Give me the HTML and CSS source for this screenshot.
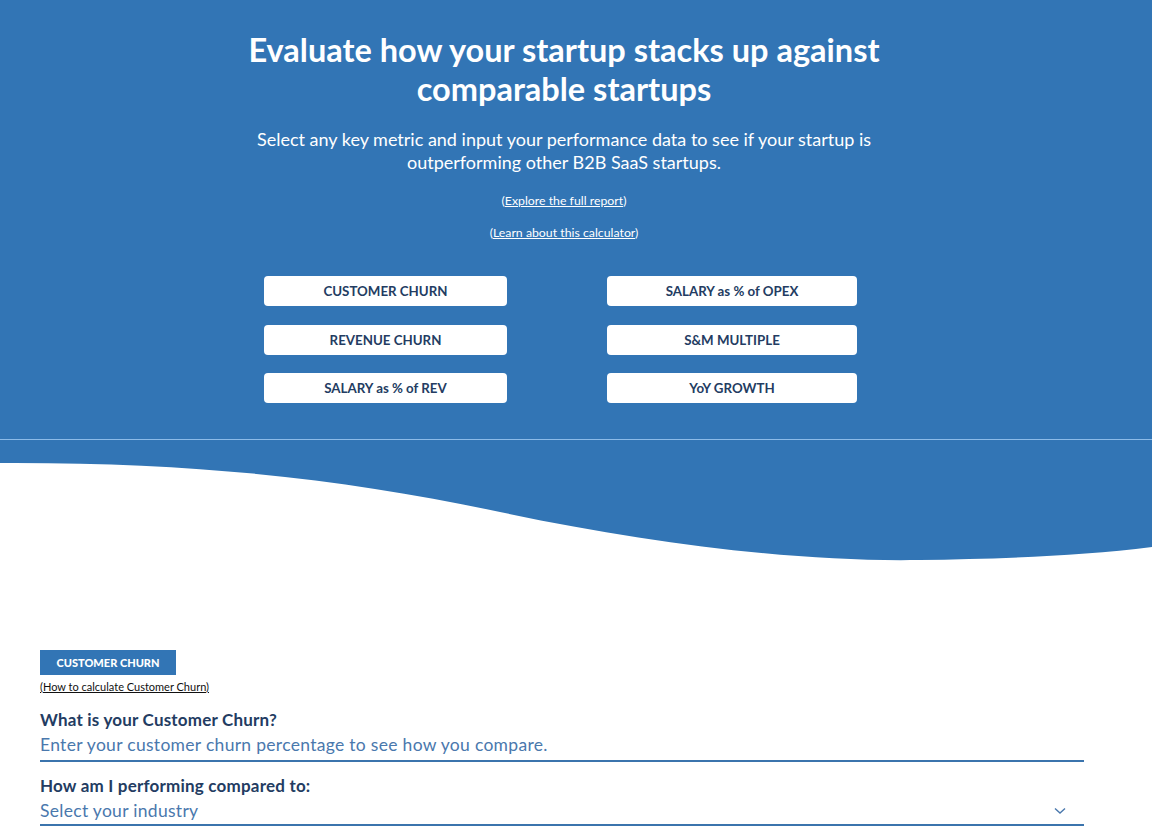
FILE: index.html
```html
<!DOCTYPE html>
<html lang="en">
<head>
    <meta charset="UTF-8">
    <meta name="viewport" content="width=device-width, initial-scale=1.0">
    <title>Startup Benchmark Calculator</title>
    <link rel="stylesheet" href="styles.css">
</head>
<body>
    <header class="hero">
        <div class="hero-inner">
            <h1>Evaluate how your startup stacks up against comparable startups</h1>
            <p class="lead">Select any key metric and input your performance data to see if your startup is outperforming other B2B SaaS startups.</p>
            <p class="hero-link">(<a href="#">Explore the full report</a>)</p>
            <p class="hero-link">(<a href="#">Learn about this calculator</a>)</p>
            <div class="metrics">
                <button class="metric">CUSTOMER CHURN</button>
                <button class="metric">SALARY as % of OPEX</button>
                <button class="metric">REVENUE CHURN</button>
                <button class="metric">S&amp;M MULTIPLE</button>
                <button class="metric">SALARY as % of REV</button>
                <button class="metric">YoY GROWTH</button>
            </div>
        </div>
    </header>
    <div class="rule"></div>
    <!-- wave between the blue header and the calculator -->
    <svg class="wave" viewBox="0 0 1152 130" preserveAspectRatio="none">
        <path d="M0,0 H1152 V107 C1080,116 1000,119 919,120 C800,122 650,104 500,72 C350,40 200,22 0,23 Z" fill="#3275b5"/>
    </svg>

    <main class="calc">
        <span class="tag">CUSTOMER CHURN</span>
        <a class="howto" href="#">(How to calculate Customer Churn)</a>

        <label class="field-label" for="churn">What is your Customer Churn?</label>
        <input class="field" id="churn" type="text" placeholder="Enter your customer churn percentage to see how you compare.">

        <label class="field-label second" for="industry">How am I performing compared to:</label>
        <div class="select-wrap">
            <select class="field select" id="industry">
                <option>Select your industry</option>
            </select>
            <svg class="chevron" width="12" height="8" viewBox="0 0 12 8">
                <path d="M1 1.5 L6 6 L11 1.5" fill="none" stroke="#4a78ad" stroke-width="1.4"/>
            </svg>
        </div>
    </main>
</body>
</html>
```

FILE: styles.css
```css
body {
    margin: 0;
    padding: 0;
    font-family: Lato, "Open Sans", Arial, sans-serif;
    background: #fff;
    overflow: hidden;
}

.hero {
    background-color: #3275b5;
    color: #fff;
    height: 439px;
    padding-top: 30px;
    box-sizing: border-box;
}

.hero-inner {
    width: 680px;
    margin-left: 224px; /* content sits slightly left of the page centre */
    text-align: center;
}

h1 {
    font-size: 32.5px;
    line-height: 39px;
    font-weight: 700;
    margin: 0 0 20px;
    padding: 0 10px;
}

.lead {
    font-size: 18px;
    line-height: 23px;
    margin: 0 0 19px;
}

.hero-link {
    font-size: 12.3px;
    margin: 0 0 17px;
}

.hero-link a {
    color: #fff;
}

.metrics {
    display: grid;
    grid-template-columns: 243px 250px;
    column-gap: 100px;
    row-gap: 18.5px;
    justify-content: start;
    margin-top: 36px;
    padding-left: 40px;
}

.metric {
    height: 30px;
    background: #fff;
    border: none;
    border-radius: 4px;
    color: #233c62;
    font-family: inherit;
    font-weight: 700;
    font-size: 13.3px;
    cursor: pointer;
}

.rule {
    height: 1px;
    background: #8cbbe8;
}

.wave {
    display: block;
    width: 100%;
    height: 130px;
}

.calc {
    padding: 80px 0 0 40px;
    width: 1044px;
    display: flex;
    flex-direction: column;
    align-items: flex-start;
}

.tag {
    background: #3275b5;
    color: #fff;
    font-size: 11px;
    font-weight: 900;
    line-height: 25px;
    width: 136px;
    text-align: center;
    white-space: nowrap;
}

.howto {
    color: #111;
    font-size: 11px;
    margin-top: 5px;
}

.field-label {
    color: #233c62;
    font-weight: 700;
    font-size: 17px;
    letter-spacing: 0.2px;
    margin-top: 16px;
}

.field-label.second {
    margin-top: 13px;
}

.field {
    width: 100%;
    box-sizing: border-box;
    border: none;
    border-bottom: 2px solid #3b74ad;
    font-family: inherit;
    font-size: 17.5px;
    letter-spacing: 0.3px;
    color: #4a78ad;
    padding: 4px 0 5px;
    outline: none;
    background: transparent;
}

.field::placeholder {
    color: #4a78ad;
}

.select-wrap {
    position: relative;
    width: 100%;
}

.select {
    appearance: none;
    -webkit-appearance: none;
    padding-bottom: 3px;
}

.chevron {
    position: absolute;
    right: 18px;
    top: 11px;
}
```
